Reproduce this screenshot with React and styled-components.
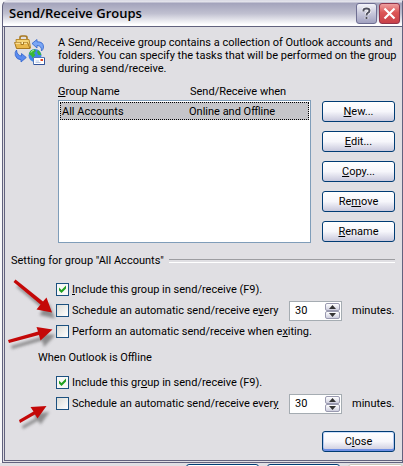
import React, { useState } from "react";
import styled, { createGlobalStyle } from "styled-components";

const App = () => {
  const [settings, setSettings] = useState({
    onlineInclude: true,
    onlineSchedule: false,
    onlineExit: false,
    offlineInclude: true,
    offlineSchedule: false,
  });
  const [minutes, setMinutes] = useState({ online: 30, offline: 30 });

  const handleCheck = (e) => {
    setSettings({ ...settings, [e.target.name]: e.target.checked });
  };

  const handleMinutes = (name, value) => {
    setMinutes({ ...minutes, [name]: Math.max(1, Number(value) || 1) });
  };

  const checkbox = (name) => (
    <Checkbox
      type="checkbox"
      name={name}
      checked={settings[name]}
      onChange={handleCheck}
    />
  );

  const spinner = (name) => (
    <>
      <Spinner>
        <SpinnerInput
          type="text"
          aria-label={`${name} minutes`}
          value={minutes[name]}
          onChange={(e) => handleMinutes(name, e.target.value)}
        />
        <SpinnerButtons>
          <SpinnerButton
            type="button"
            aria-label="Increase"
            onClick={() => handleMinutes(name, minutes[name] + 1)}
          >
            <svg width="7" height="4" viewBox="0 0 7 4">
              <path d="M3.5 0L7 4H0Z" fill="#333" />
            </svg>
          </SpinnerButton>
          <SpinnerButton
            type="button"
            aria-label="Decrease"
            onClick={() => handleMinutes(name, minutes[name] - 1)}
          >
            <svg width="7" height="4" viewBox="0 0 7 4">
              <path d="M0 0H7L3.5 4Z" fill="#333" />
            </svg>
          </SpinnerButton>
        </SpinnerButtons>
      </Spinner>
      <Unit>minutes.</Unit>
    </>
  );

  return (
    <>
      <GlobalStyle />
      <Page>
        <Dialog role="dialog" aria-labelledby="title">
          <TitleBar>
            <Title id="title">Send/Receive Groups</Title>
            <TitleButton type="button" aria-label="Help">
              <svg width="19" height="19" viewBox="0 0 19 19" fill="none">
                <path
                  d="M6.5 7.5V6.2Q6.5 4.5 9.5 4.5T12.5 6.7Q12.5 8 10.8 8.8Q9.5 9.5 9.5 11.5M9.5 13V15"
                  stroke="#fff"
                  strokeWidth="3.4"
                />
                <path
                  d="M6.5 7.5V6.2Q6.5 4.5 9.5 4.5T12.5 6.7Q12.5 8 10.8 8.8Q9.5 9.5 9.5 11.5M9.5 13V15"
                  stroke="#50505f"
                  strokeWidth="2"
                />
              </svg>
            </TitleButton>
            <TitleButton type="button" aria-label="Close window" $danger>
              <svg width="19" height="19" viewBox="0 0 19 19">
                <path
                  d="M4.5 4.5L14.5 14.5M14.5 4.5L4.5 14.5"
                  stroke="#fff"
                  strokeWidth="2.2"
                />
              </svg>
            </TitleButton>
          </TitleBar>

          <Body>
            <Intro>
              <GroupIcon />
              <Description>
                A Send/Receive group contains a collection of Outlook accounts
                and folders. You can specify the tasks that will be performed on
                the group during a send/receive.
              </Description>
            </Intro>

            <Groups>
              <GroupTable>
                <thead>
                  <HeadRow>
                    <th scope="col">
                      <u>G</u>roup Name
                    </th>
                    <th scope="col">Send/Receive when</th>
                  </HeadRow>
                </thead>
                <List>
                  <GroupRow>
                    <td>All Accounts</td>
                    <td>Online and Offline</td>
                  </GroupRow>
                </List>
              </GroupTable>
              <Actions>
                <Button type="button">
                  <u>N</u>ew...
                </Button>
                <Button type="button">
                  <u>E</u>dit...
                </Button>
                <Button type="button">
                  <u>C</u>opy...
                </Button>
                <Button type="button">
                  Re<u>m</u>ove
                </Button>
                <Button type="button">
                  <u>R</u>ename
                </Button>
              </Actions>
            </Groups>

            <SectionTitle>Setting for group "All Accounts"</SectionTitle>
            <Options>
              <Option>
                <Label>
                  {checkbox("onlineInclude")}
                  <span>
                    <u>I</u>nclude this group in send/receive (F9).
                  </span>
                </Label>
              </Option>
              <Option>
                <Label>
                  {checkbox("onlineSchedule")}
                  <span>
                    Schedule an automatic send/receive e<u>v</u>ery
                  </span>
                </Label>
                {spinner("online")}
              </Option>
              <Option>
                <Label>
                  {checkbox("onlineExit")}
                  <span>
                    Perform an automatic send/receive when e<u>x</u>iting.
                  </span>
                </Label>
              </Option>
            </Options>

            <SubTitle>When Outlook is Offline</SubTitle>
            <Options>
              <Option>
                <Label>
                  {checkbox("offlineInclude")}
                  <span>
                    Include this gr<u>o</u>up in send/receive (F9).
                  </span>
                </Label>
              </Option>
              <Option>
                <Label>
                  {checkbox("offlineSchedule")}
                  <span>
                    Schedule an automatic send/receive ever<u>y</u>
                  </span>
                </Label>
                {spinner("offline")}
              </Option>
            </Options>

            <Footer>
              <Button type="button" $primary>
                C<u>l</u>ose
              </Button>
            </Footer>
          </Body>
        </Dialog>
        <Behind>
          <BehindButton />
          <BehindButton />
          <BehindButton $disabled />
        </Behind>
        <Arrows />
      </Page>
    </>
  );
};

const GroupIcon = () => (
  <svg width="32" height="32" viewBox="0 0 32 32" fill="none" aria-hidden="true">
    <path d="M6 4.5V2.5Q6 1 8 1H11Q13 1 13 2.5V4.5" stroke="#a87820" strokeWidth="1.6" />
    <path d="M2 4.5H15L16.5 13H2.5Z" fill="#f5d478" stroke="#b98a2c" />
    <path d="M0.6 7.5H13.5L16 13.5H2.5Z" fill="#e9b84c" stroke="#a87820" />
    <path d="M1.5 8.2H13" stroke="#fff0b4" />
    <path d="M7 7V9.5H9.5V7" fill="#fff0b4" stroke="#a87820" />
    <path
      d="M18 8.5L23 4.5V6.8Q29.5 6.5 29.5 12Q29.5 14.5 27.5 16Q27.8 10.5 23 10.5V13Z"
      fill="#7aa6f5"
      stroke="#2f62cc"
      strokeWidth="0.8"
    />
    <path
      d="M2.5 15Q0.5 17 1.3 20.5Q2.5 24.5 7 24.8V27L12.3 22.5L7.5 18.5V21Q3 20.5 2.5 15Z"
      fill="#5b8cf0"
      stroke="#2f62cc"
      strokeWidth="0.8"
    />
    <circle cx="21" cy="20.5" r="6.5" fill="#3d86e8" />
    <path
      d="M15 19Q16 14.5 20.5 14.2L22 16L20 18L21.5 20L18.5 23L17.5 21ZM24 15Q27 17 27.4 20L24.5 20L23 17.5Z"
      fill="#38b838"
    />
    <path d="M17 17.5Q18 15.3 20 15" stroke="#b6f29c" />
    <path d="M19.5 22.5H30.5V29.5H19.5Z" fill="#fff" stroke="#5478b8" />
    <path d="M20 29.5H30.5V23" stroke="#34549a" />
    <path d="M26.5 24H29V26H26.5Z" fill="#e04828" />
    <path d="M21.5 26H25M21.5 27.5H26.5" stroke="#a8bce0" strokeWidth="0.8" />
  </svg>
);

// Callout arrows drawn over the dialog, pointing at the unticked boxes
const Arrows = () => (
  <ArrowLayer width="80" height="180" viewBox="0 270 80 180" aria-hidden="true">
    <defs>
      <filter id="soft" x="-30%" y="-30%" width="160%" height="160%">
        <feGaussianBlur stdDeviation="1.5" />
      </filter>
    </defs>
    <g fill="#555" opacity="0.6" filter="url(#soft)" transform="translate(3 6)">
      <path d="M15.5 279L42 300L46 297.5L52 312.5L36.5 309L40 303L13.5 281Z" />
      <path d="M8 340L38 331L36.5 327L52.5 329L41 341L39 334.5L9 343Z" />
      <path d="M19 420L33 412L30.5 407.5L46.5 406L37.5 418.5L35 414.5L20 423Z" />
    </g>
    <g fill="#c40808">
      <path d="M15.5 279.5L43 301.5L46.5 297.5L52 312.5L36.5 309.5L40.5 304.5L13.5 282Z" />
      <path d="M8 340L38 331.5L36.5 327L52.5 329.5L40.5 340.5L39 335L9 343Z" />
      <path d="M19 420L33.5 411.5L30.5 407L46.5 406L37.5 418.5L35 414.5L20 423Z" />
    </g>
  </ArrowLayer>
);

const GlobalStyle = createGlobalStyle`
  * {
    box-sizing: border-box;
  }
  body {
    margin: 0;
    background: #e0dfe3;
    color: #000;
    font-family: Roboto, "Liberation Sans", sans-serif;
    font-size: 11px;
    line-height: 13px;
  }
  button, input {
    font: inherit;
    color: inherit;
  }
  u {
    text-underline-offset: 1px;
  }
`;

const Page = styled.div`
  position: relative;
  min-height: 100vh;
  overflow: hidden;
`;

const Dialog = styled.div`
  padding-left: 2px;
  background: #f7f7f9;
`;

const TitleBar = styled.div`
  display: flex;
  align-items: center;
  gap: 2px;
  height: 27px;
  padding: 0 2px 1px 6px;
  border: 1px solid #62627e;
  border-top-color: #dcdce6;
  border-radius: 6px 0 0 0;
  background: linear-gradient(#f2f2f6 0, #a4a4bc 10%, #c0c0d0 50%, #fff 94%);
`;

const Title = styled.h1`
  flex: 1;
  margin: 0;
  font-family: "Open Sans", sans-serif;
  font-size: 13px;
  font-weight: 600;
  line-height: 20px;
`;

const TitleButton = styled.button`
  display: flex;
  align-items: center;
  justify-content: center;
  width: 21px;
  height: 21px;
  padding: 0;
  border: 1px solid ${({ $danger }) => ($danger ? "#93344a" : "#6f6f93")};
  border-radius: 3px;
  background: ${({ $danger }) =>
    $danger
      ? "linear-gradient(#eea0a0, #dc5656 45%, #c84048)"
      : "linear-gradient(#f4f4fa, #c6c6da 50%, #a2a2c0)"};
`;

const Body = styled.div`
  padding: 8px 7px 8px 6px;
  border: solid #62627e;
  border-width: 0 1px 3px 3px;
  border-left-style: double;
  border-bottom-style: double;
  background: #e0dfe3;
`;

const Intro = styled.div`
  display: flex;
  gap: 12px;
  margin-right: -5px;
  padding-left: 3px;
`;

const Description = styled.p`
  flex: 1;
  margin: 0;
  padding-top: 1px;
`;

const Groups = styled.div`
  display: flex;
  align-items: flex-end;
  gap: 11px;
  margin: 10px 0 11px 47px;
`;

const GroupTable = styled.table`
  display: block;
  flex: 1;
  th {
    padding: 0;
    font-weight: 400;
    text-align: left;
  }
  td {
    padding: 0;
  }
  thead {
    display: block;
  }
`;

const HeadRow = styled.tr`
  display: grid;
  grid-template-columns: 132px 1fr;
  height: 15px;
`;

const List = styled.tbody`
  display: block;
  height: 143px;
  padding: 1px;
  border: 1px solid #7f9db9;
  background: #fff;
`;

const GroupRow = styled.tr`
  display: grid;
  grid-template-columns: 128px 1fr;
  align-items: center;
  height: 18px;
  border: 1px dotted #000;
  background: #c5c5c9;
  td:first-child {
    padding-left: 1px;
  }
`;

const Actions = styled.div`
  display: flex;
  flex-direction: column;
  gap: 9px;
  padding-bottom: 1px;
`;

const Button = styled.button`
  width: 73px;
  height: 21px;
  padding: 0;
  border: 1px solid #003c74;
  border-radius: 3px;
  background: linear-gradient(#fff, #f6f6fb 50%, #c8c8dc);
  box-shadow: ${({ $primary }) =>
    $primary
      ? "inset 0 1px 0 #cee0fc, inset 0 -2px 0 #6f8fe4, inset 1px 0 0 #b4c8f0, inset -1px 0 0 #b4c8f0"
      : "none"};
`;

const SectionTitle = styled.h2`
  display: flex;
  align-items: center;
  gap: 5px;
  margin: 0;
  font-size: inherit;
  font-weight: 400;
  &::after {
    content: "";
    flex: 1;
    height: 2px;
    border-top: 1px solid #9d9da1;
    border-bottom: 1px solid #fff;
  }
`;

const SubTitle = styled(SectionTitle)`
  margin: 9px 0 8px 27px;
  &::after {
    content: none;
  }
`;

const Options = styled.div`
  margin-left: 45px;
  ${SectionTitle} + & {
    margin-top: 12px;
  }
  ${SubTitle} + & {
    margin-top: 8px;
  }
`;

const Option = styled.div`
  display: flex;
  align-items: center;
  height: 21px;
`;

const Label = styled.label`
  display: flex;
  flex: 1;
  align-items: center;
  gap: 3px;
  white-space: nowrap;
`;

const Checkbox = styled.input`
  appearance: none;
  width: 13px;
  height: 13px;
  margin: 0;
  border: 1px solid #1c5180;
  background: linear-gradient(135deg, #dcdcd7, #fff);
  &:checked {
    background: url("data:image/svg+xml,%3Csvg xmlns='http://www.w3.org/2000/svg' viewBox='0 0 11 11'%3E%3Cpath d='M2 3.5L4.5 6L9 1.5V4.5L4.5 9L2 6.5Z' fill='%2321a121'/%3E%3C/svg%3E")
        center / 11px 11px no-repeat,
      #f8f8f6;
  }
`;

const Spinner = styled.div`
  display: flex;
  width: 53px;
  height: 20px;
  padding: 1px;
  border: 1px solid #a5acb2;
  background: #fff;
`;

const SpinnerInput = styled.input`
  flex: 1;
  min-width: 0;
  padding: 0 0 0 4px;
  border: 0;
  outline: none;
  background: transparent;
`;

const SpinnerButtons = styled.div`
  display: flex;
  flex-direction: column;
`;

const SpinnerButton = styled.button`
  display: flex;
  align-items: center;
  justify-content: center;
  width: 15px;
  height: 8px;
  padding: 0;
  border: 1px solid #9a9ab0;
  border-radius: 2px;
  background: linear-gradient(#fff, #cfcfdf);
`;

const Unit = styled.span`
  width: 43px;
  margin-left: 10px;
`;

const Footer = styled.div`
  display: flex;
  justify-content: flex-end;
  margin-top: 17px;
`;

const Behind = styled.div`
  display: flex;
  justify-content: flex-end;
  gap: 8px;
  height: 3px;
  padding-top: 1px;
  overflow: hidden;
`;

const BehindButton = styled.div`
  width: 73px;
  height: 21px;
  border: 1px solid ${({ $disabled }) => ($disabled ? "#c9c7ba" : "#003c74")};
  border-radius: 3px;
  background: #fff;
  &:last-child {
    width: 55px;
  }
`;

const ArrowLayer = styled.svg`
  position: absolute;
  top: 270px;
  left: 0;
  pointer-events: none;
`;

export default App;
